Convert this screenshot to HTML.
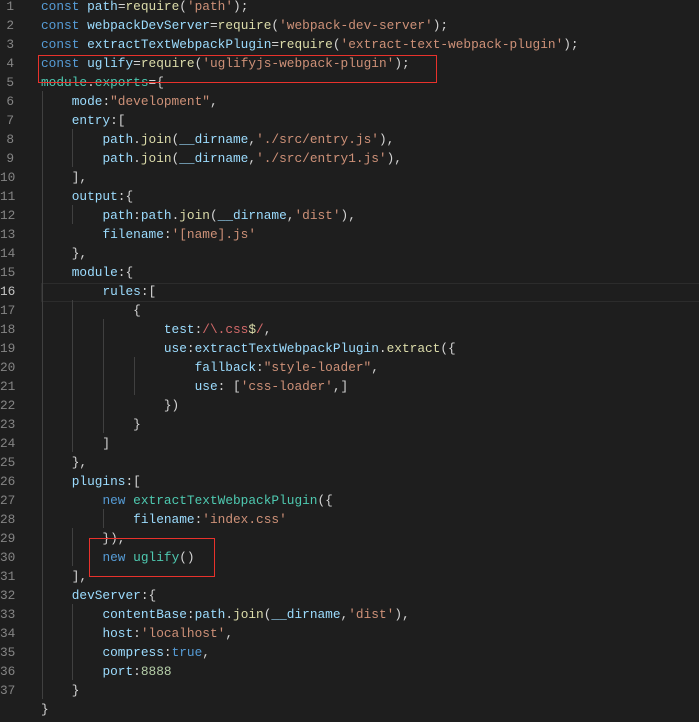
<!DOCTYPE html>
<html><head><meta charset="utf-8"><style>
html,body{margin:0;padding:0;background:#1e1e1e;width:699px;height:722px;overflow:hidden;position:relative}
.ln,.cd{position:absolute;font-family:"Liberation Mono",monospace;font-size:12.8px;line-height:19px;white-space:pre}
.ln{left:0;width:14px;text-align:right;color:#858585}
.cd{left:41px;color:#d4d4d4}
.k{color:#569cd6}.v{color:#9cdcfe}.f{color:#dcdcaa}.s{color:#ce9178}.c{color:#4ec9b0}.n{color:#b5cea8}.r{color:#d16969}
.g{position:absolute;width:1px;background:#404040}
.rd{position:absolute;background:#e8322c;z-index:5}
</style></head><body>
<div style="position:absolute;left:41px;top:283px;width:660px;height:19px;border:1px solid #2c2c2c;box-sizing:border-box"></div>
<div class="g" style="left:42px;top:91px;height:608px"></div>
<div class="g" style="left:72px;top:129px;height:38px"></div>
<div class="g" style="left:72px;top:205px;height:19px"></div>
<div class="g" style="left:72px;top:300px;height:152px"></div>
<div class="g" style="left:72px;top:528px;height:38px"></div>
<div class="g" style="left:72px;top:604px;height:76px"></div>
<div class="g" style="left:103px;top:319px;height:114px"></div>
<div class="g" style="left:103px;top:509px;height:19px"></div>
<div class="g" style="left:134px;top:357px;height:38px"></div>
<div id="c"></div>
<div class="rd" style="left:38px;top:55px;width:399px;height:1px"></div>
<div class="rd" style="left:38px;top:82px;width:399px;height:1px"></div>
<div class="rd" style="left:38px;top:55px;width:1px;height:28px"></div>
<div class="rd" style="left:436px;top:55px;width:1px;height:28px"></div>
<div class="rd" style="left:89px;top:538px;width:126px;height:1px"></div>
<div class="rd" style="left:89px;top:576px;width:126px;height:1px"></div>
<div class="rd" style="left:89px;top:538px;width:1px;height:39px"></div>
<div class="rd" style="left:214px;top:538px;width:1px;height:39px"></div>
<script>
const L=[
'<span class=k>const</span> <span class=v>path</span>=<span class=f>require</span>(<span class=s>\'path\'</span>);',
'<span class=k>const</span> <span class=v>webpackDevServer</span>=<span class=f>require</span>(<span class=s>\'webpack-dev-server\'</span>);',
'<span class=k>const</span> <span class=v>extractTextWebpackPlugin</span>=<span class=f>require</span>(<span class=s>\'extract-text-webpack-plugin\'</span>);',
'<span class=k>const</span> <span class=v>uglify</span>=<span class=f>require</span>(<span class=s>\'uglifyjs-webpack-plugin\'</span>);',
'<span class=c>module</span>.<span class=c>exports</span>={',
'    <span class=v>mode</span>:<span class=s>"development"</span>,',
'    <span class=v>entry</span>:[',
'        <span class=v>path</span>.<span class=f>join</span>(<span class=v>__dirname</span>,<span class=s>\'./src/entry.js\'</span>),',
'        <span class=v>path</span>.<span class=f>join</span>(<span class=v>__dirname</span>,<span class=s>\'./src/entry1.js\'</span>),',
'    ],',
'    <span class=v>output</span>:{',
'        <span class=v>path</span>:<span class=v>path</span>.<span class=f>join</span>(<span class=v>__dirname</span>,<span class=s>\'dist\'</span>),',
'        <span class=v>filename</span>:<span class=s>\'[name].js\'</span>',
'    },',
'    <span class=v>module</span>:{',
'        <span class=v>rules</span>:[',
'            {',
'                <span class=v>test</span>:<span class=r>/\\.css</span><span class=f>$</span><span class=r>/</span>,',
'                <span class=v>use</span>:<span class=v>extractTextWebpackPlugin</span>.<span class=f>extract</span>({',
'                    <span class=v>fallback</span>:<span class=s>"style-loader"</span>,',
'                    <span class=v>use</span>: [<span class=s>\'css-loader\'</span>,]',
'                })',
'            }',
'        ]',
'    },',
'    <span class=v>plugins</span>:[',
'        <span class=k>new</span> <span class=c>extractTextWebpackPlugin</span>({',
'            <span class=v>filename</span>:<span class=s>\'index.css\'</span>',
'        }),',
'        <span class=k>new</span> <span class=c>uglify</span>()',
'    ],',
'    <span class=v>devServer</span>:{',
'        <span class=v>contentBase</span>:<span class=v>path</span>.<span class=f>join</span>(<span class=v>__dirname</span>,<span class=s>\'dist\'</span>),',
'        <span class=v>host</span>:<span class=s>\'localhost\'</span>,',
'        <span class=v>compress</span>:<span class=k>true</span>,',
'        <span class=v>port</span>:<span class=n>8888</span>',
'    }',
'}'];
let h='';
L.forEach((t,i)=>{const y=-3.5+19*i;
h+=(i<37?'<div class="ln" style="top:'+y+'px;'+(i==15?'color:#c6c6c6':'')+'">'+(i+1)+'</div>':'')+'<div class="cd" style="top:'+y+'px">'+t+'</div>';});
document.getElementById('c').innerHTML=h;
</script>
</body></html>
